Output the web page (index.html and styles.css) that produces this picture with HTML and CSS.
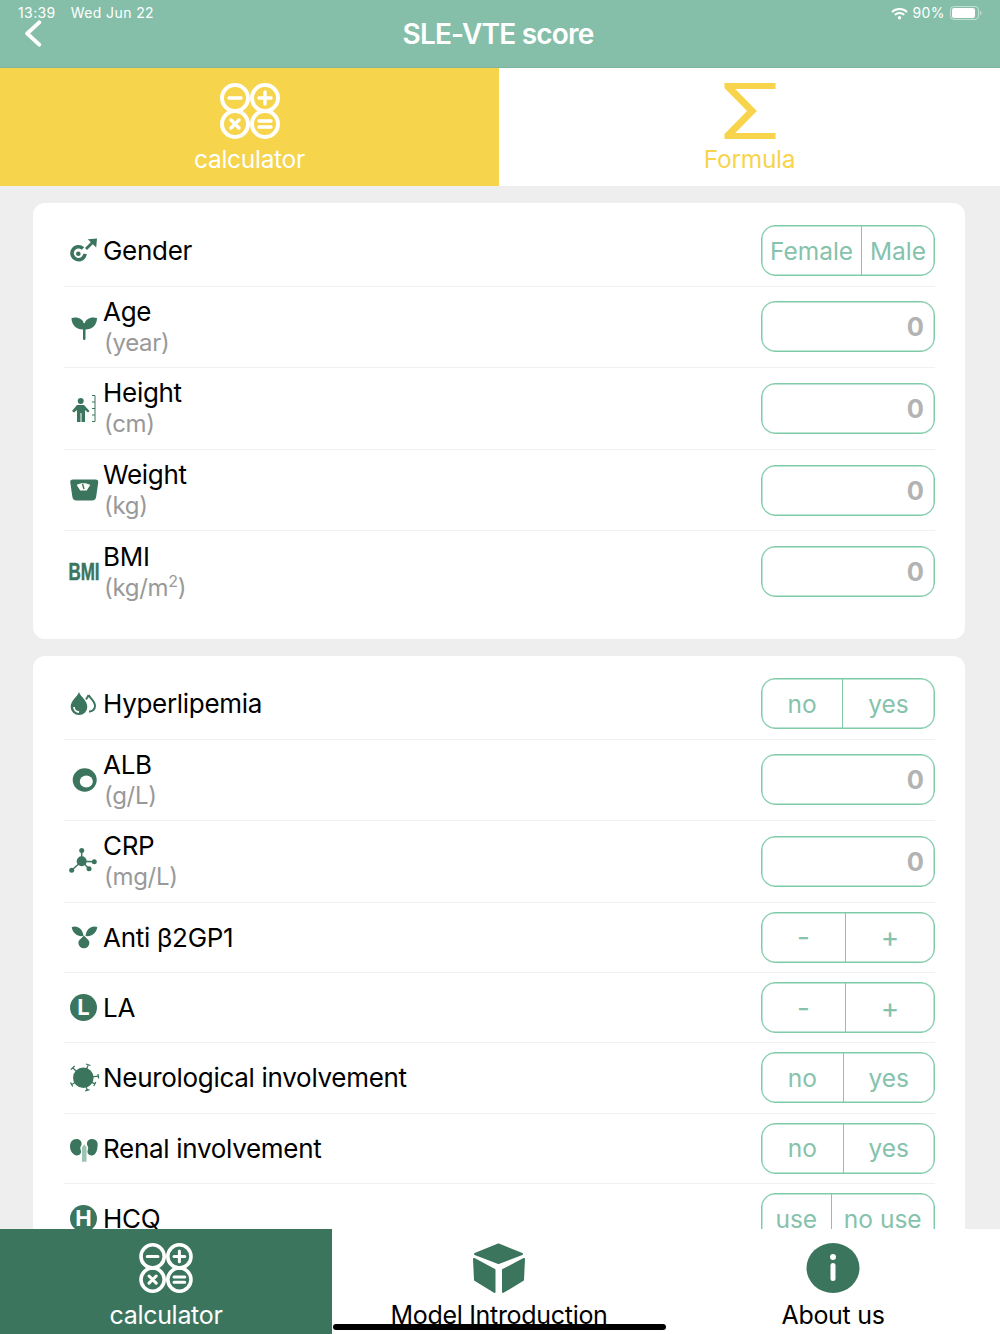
FILE: index.html
```html
<!DOCTYPE html>
<html lang="en">
  <head>
    <meta charset="UTF-8" />
    <meta name="viewport" content="width=device-width, initial-scale=1.0" />
    <title>SLE-VTE score</title>
    <link rel="stylesheet" href="styles.css">
  </head>
  <body>
    <svg class="defs" width="0" height="0">
      <symbol id="calc" viewBox="0 0 60 56">
        <g fill="none" stroke="currentColor" stroke-width="4">
          <circle cx="15" cy="15" r="13" />
          <circle cx="45" cy="15" r="13" />
          <circle cx="15" cy="41" r="13" />
          <circle cx="45" cy="41" r="13" />
          <path stroke-width="3.400" stroke-linecap="round" d="M9 15h12M39 15h12M45 9v12M11 37l8 8M19 37l-8 8M39 38h12M39 44h12" />
        </g>
      </symbol>
    </svg>

    <header class="nav">
      <div class="status">
        <span>13:39</span>
        <span>Wed Jun 22</span>
        <span class="status-right">
          <svg class="wifi" viewBox="0 0 18 13"><path fill="none" stroke="currentColor" stroke-width="2" d="M1 5a11.500 11.500 0 0 1 16 0M4 8a7 7 0 0 1 10 0" /><circle cx="9" cy="11" r="1.800" fill="currentColor" /></svg>
          <span>90%</span>
          <svg class="battery" viewBox="0 0 32 14"><rect x="0.500" y="0.500" width="28" height="13" rx="3.500" fill="none" stroke="currentColor" opacity="0.5" /><rect x="2" y="2" width="23" height="10" rx="2" fill="currentColor" /><path d="M30 5v4c1 0 1.500-1 1.500-2s-.5-2-1.500-2z" fill="currentColor" opacity="0.5" /></svg>
        </span>
      </div>
      <svg class="back" viewBox="0 0 18 28"><path fill="none" stroke="currentColor" stroke-width="4" stroke-linecap="round" stroke-linejoin="round" d="M15.500 2.500L3 14l12.500 11.500" /></svg>
      <h1>SLE-VTE score</h1>
    </header>

    <nav class="tabs">
      <a class="tab tab-on">
        <svg class="tab-icon"><use href="#calc" /></svg>
        <span>calculator</span>
      </a>
      <a class="tab">
        <svg class="tab-icon sigma" viewBox="0 0 52 57"><polygon fill="currentColor" points="0,0 52,0 52,6 11,6 33,28.500 11,51 52,51 52,57 0,57 0,52 23,28.500 0,5" /></svg>
        <span>Formula</span>
      </a>
    </nav>

    <main class="scroll">
      <section class="card">
        <div class="row">
          <svg class="icon" viewBox="0 0 32 32"><path fill="none" stroke="currentColor" stroke-width="3.600" d="M15 13.500A6.500 6.500 0 1 0 17 18.800" /><circle cx="10.300" cy="18.800" r="2.300" fill="currentColor" /><path stroke="currentColor" stroke-width="2.800" d="M18 14l8-8" /><polygon fill="currentColor" points="19.800,4.300 29,3.500 28.200,12.500" /></svg>
          <div class="label">Gender</div>
          <div class="seg"><span class="seg-female">Female</span><span class="seg-rest">Male</span></div>
        </div>
        <div class="row">
          <svg class="icon" viewBox="0 0 32 32"><g fill="currentColor"><path d="M3.500 7c5.500-1.500 11.500 0 12.500 6.500v5C9 19 3.500 14.500 3.500 7z" /><path d="M29 7c-5.500-1.500-11.500 0-12.500 6.500v5C23.500 19 29 14.500 29 7z" /><rect x="15" y="12" width="2.500" height="17" rx="1.200" /></g></svg>
          <div class="label">Age<small>(year)</small></div>
          <div class="field">0</div>
        </div>
        <div class="row">
          <svg class="icon" viewBox="0 0 32 32"><circle cx="12.700" cy="9" r="3" fill="currentColor" /><path fill="currentColor" d="M9 13h7l5.500 6-1.500 1.500-3-2.500v12h-3.500v-9h-1v9H9V18l-3 2.500L4 19z" /><path fill="none" stroke="currentColor" stroke-width="1" d="M24 3.500h3v26h-3M24 10h3M24 16.500h3M24 23h3" /></svg>
          <div class="label">Height<small>(cm)</small></div>
          <div class="field">0</div>
        </div>
        <div class="row">
          <svg class="icon" viewBox="0 0 32 32"><path fill="currentColor" fill-rule="evenodd" d="M5 5.500h22.500c2 0 3 1 2.700 3l-2 14c-.3 2.500-1.700 4-4.200 4H8.500c-2.500 0-3.900-1.500-4.200-4l-2-14c-.3-2 .7-3 2.700-3zm3.700 5.500c3-2.300 10.500-2.300 13.500 0l-3.500 5.500h-6.500z" /><path stroke="currentColor" stroke-width="1.400" d="M14.500 10l1.500 5" /></svg>
          <div class="label">Weight<small>(kg)</small></div>
          <div class="field">0</div>
        </div>
        <div class="row row-last">
          <div class="bmi-icon">BMI</div>
          <div class="label">BMI<small>(kg/m<sup>2</sup>)</small></div>
          <div class="field">0</div>
        </div>
      </section>

      <section class="card">
        <div class="row">
          <svg class="icon" viewBox="0 0 32 32"><path fill="currentColor" d="M11 4c1.500 5 8.300 8 8.300 15a8.300 8 0 0 1-16.600 0c0-7 6.800-10 8.300-15z" /><path fill="none" stroke="currentColor" stroke-width="2" d="M20.500 7c2 4 6.500 6 6.500 11a5.500 5.500 0 0 1-6 5.500M20.500 7c-.5 1.500-1.500 3-2.500 4.500" /><path fill="none" stroke="#fff" stroke-width="1.800" d="M6 19a5 5 0 0 0 5 5" /></svg>
          <div class="label">Hyperlipemia</div>
          <div class="seg"><span class="seg-no">no</span><span class="seg-rest">yes</span></div>
        </div>
        <div class="row">
          <svg class="icon" viewBox="0 0 32 32"><ellipse cx="16.700" cy="16" rx="12" ry="11.700" fill="currentColor" /><ellipse cx="18.300" cy="17.500" rx="6.500" ry="6" fill="#fff" /></svg>
          <div class="label">ALB<small>(g/L)</small></div>
          <div class="field">0</div>
        </div>
        <div class="row">
          <svg class="icon" viewBox="0 0 32 32"><g fill="currentColor"><circle cx="13.700" cy="16.200" r="5" /><circle cx="13.700" cy="5.500" r="2.500" /><circle cx="26.300" cy="16.800" r="2.500" /><circle cx="3.700" cy="25.200" r="2.500" /><circle cx="21" cy="23.800" r="2.500" /></g><path fill="none" stroke="currentColor" stroke-width="1.500" d="M13.700 5.500v10.700l12.600.6M13.700 16.200l-10 9M13.700 16.200l7.300 7.600" /></svg>
          <div class="label">CRP<small>(mg/L)</small></div>
          <div class="field">0</div>
        </div>
        <div class="row row-single">
          <svg class="icon" viewBox="0 0 32 32"><g fill="currentColor"><path d="M3.700 6c5.500-2 11 1.500 11.800 9C9.500 16 4.500 12 3.700 6z" /><path d="M29.300 6c-5.500-2-11 1.500-11.800 9C23.500 16 28.500 12 29.300 6z" /><path d="M16 14.500c2.500 3 5.400 4.500 5.400 7.300a5.500 5.500 0 0 1-11 0c0-2.800 3-4.300 5.600-7.300z" /></g></svg>
          <div class="label">Anti β2GP1</div>
          <div class="seg"><span class="seg-minus seg-sign">-</span><span class="seg-rest seg-sign">+</span></div>
        </div>
        <div class="row row-single">
          <div class="badge">L</div>
          <div class="label">LA</div>
          <div class="seg"><span class="seg-minus seg-sign">-</span><span class="seg-rest seg-sign">+</span></div>
        </div>
        <div class="row row-single">
          <svg class="icon" viewBox="0 0 32 32"><circle cx="15.300" cy="15.800" r="10.300" fill="currentColor" /><path stroke="currentColor" stroke-width="1.300" fill="none" d="M15.300 15.800L4.700 5.800M2.800 7.600l3.800-3.600M15.300 15.800L20.300 2.500M18 2l4.500 1.500M15.300 15.800l15 -1.600M30 12l.6 4.500M15.300 15.800l4 12.700M17 29l4.500-1.300M15.300 15.800L3.700 22.500M2.500 20.500l2.300 4M15.300 15.800l11.500 6M25.800 24l2-4" /></svg>
          <div class="label">Neurological involvement</div>
          <div class="seg"><span class="seg-no2">no</span><span class="seg-rest">yes</span></div>
        </div>
        <div class="row row-single">
          <svg class="icon" viewBox="0 0 32 32"><g fill="currentColor"><path d="M8.500 7c3.500 0 5.500 2.500 5 5.500-.3 1.500-1.200 2-1.200 3.500 0 1.500 1 2.500.7 4.500-.8 3-4.500 4-7 2C3 20.500 2 17 2 14.500 2 10 4.500 7 8.500 7z" /><path d="M24 7c-3.500 0-5.500 2.500-5 5.500.3 1.500 1.200 2 1.200 3.500 0 1.500-1 2.500-.7 4.500.8 3 4.500 4 7 2 2-2 3-5.500 3-8C30.500 10 28 7 24 7z" /></g><path fill="#9cc4b3" d="M14 15l2.200-2.500 2.300 2.500v14.700H14z" /></svg>
          <div class="label">Renal involvement</div>
          <div class="seg"><span class="seg-no2">no</span><span class="seg-rest">yes</span></div>
        </div>
        <div class="row row-single">
          <div class="badge">H</div>
          <div class="label">HCQ</div>
          <div class="seg"><span class="seg-use">use</span><span class="seg-rest">no use</span></div>
        </div>
      </section>
    </main>

    <footer class="bottom">
      <a class="bottom-item bottom-on">
        <svg class="bottom-icon"><use href="#calc" /></svg>
        <span>calculator</span>
      </a>
      <a class="bottom-item">
        <svg class="bottom-icon cube" viewBox="0 0 54 50"><g fill="currentColor" stroke="currentColor" stroke-width="2" stroke-linejoin="round"><polygon points="26.500,1.500 50,11 26.500,20 3,11" /><polygon points="2,16 22.500,27 22.500,49 3,37" /><polygon points="52,16 31,27 31,49 51,37" /></g></svg>
        <span>Model Introduction</span>
      </a>
      <a class="bottom-item">
        <svg class="bottom-icon" viewBox="0 0 54 50"><ellipse cx="27" cy="25" rx="26.500" ry="25" fill="currentColor" /><circle cx="27" cy="14" r="3" fill="#fff" /><rect x="24.500" y="20" width="5" height="18" rx="2.500" fill="#fff" /></svg>
        <span>About us</span>
      </a>
    </footer>
    <div class="home-bar"></div>
  </body>
</html>
```

FILE: styles.css
```css
html,
body {
  margin: 0;
  padding: 0;
  height: 100%;
}
body {
  position: relative;
  display: flex;
  flex-direction: column;
  height: 1334px;
  overflow: hidden;
  background: #eeeeee;
  font-family: Inter, "Liberation Sans", sans-serif;
  color: #000;
}
a {
  color: inherit;
  text-decoration: none;
}
.defs {
  position: absolute;
}

.nav {
  position: relative;
  flex: none;
  display: flex;
  align-items: center;
  justify-content: center;
  height: 68px;
  padding-right: 4px;
  background: #85bfaa;
  color: #fff;
  border-bottom: 1px solid #7bb39e;
  box-sizing: border-box;
}
.nav h1 {
  margin: 0;
  font-size: 28px;
  font-weight: 600;
  letter-spacing: -0.8px;
}
.status {
  position: absolute;
  top: 4px;
  left: 18px;
  right: 18px;
  display: flex;
  gap: 15px;
  font-size: 14px;
  line-height: 18px;
  letter-spacing: 0.4px;
}
.status-right {
  margin-left: auto;
  display: flex;
  align-items: center;
  gap: 5px;
}
.wifi {
  width: 17px;
  height: 13px;
}
.battery {
  width: 32px;
  height: 14px;
}
.back {
  position: absolute;
  left: 24px;
  top: 20px;
  width: 18px;
  height: 27px;
}

.tabs {
  flex: none;
  display: flex;
  height: 118px;
}
.tab {
  flex: 1;
  display: flex;
  flex-direction: column;
  align-items: center;
  padding-top: 15px;
  box-sizing: border-box;
  background: #fff;
  color: #f7d44c;
  font-size: 24.5px;
  line-height: 30px;
  letter-spacing: -0.3px;
}
.tab-on {
  flex: none;
  width: 499px;
  background: #f6d44c;
  color: #fff;
}
.tab-icon {
  width: 60px;
  height: 56px;
  margin-bottom: 5px;
}
.sigma {
  width: 52px;
}

.scroll {
  flex: 1;
  min-height: 0;
  overflow: hidden;
  padding: 17px 35px 0 33px;
}
.card {
  background: #fff;
  border-radius: 12px;
  padding: 13px 30px 27px 31px;
  margin-bottom: 17px;
}
.row {
  display: flex;
  align-items: center;
  padding: 9.300px 0;
  border-bottom: 1px solid #f1f1f1;
}
.row-single {
  padding: 9.150px 0;
}
.row-last {
  border-bottom: 0;
}
.icon {
  flex: none;
  width: 32px;
  height: 32px;
  margin: 0 3px 0 4px;
  color: #3b755d;
}
.badge {
  flex: none;
  width: 27px;
  height: 27px;
  margin: 0 6px 0 6px;
  border-radius: 50%;
  background: #3b755d;
  color: #fff;
  font-size: 22px;
  font-weight: 700;
  line-height: 27px;
  text-align: center;
}
.bmi-icon {
  flex: none;
  width: 32px;
  margin: 0 3px 0 4px;
  color: #3b755d;
  font-family: "Liberation Sans", sans-serif;
  font-size: 20px;
  font-weight: 700;
  line-height: 24px;
  white-space: nowrap;
  display: flex;
  justify-content: center;
  transform: scale(0.85, 1.15);
  -webkit-text-stroke: 0.4px #3b755d;
}
.label {
  flex: 1;
  font-size: 26px;
  line-height: 31px;
  letter-spacing: -0.3px;
}
.label small {
  display: block;
  padding-left: 1px;
  font-size: 24px;
  color: #999;
}
.label sup {
  font-size: 16px;
  line-height: 0;
}

.seg,
.field {
  flex: none;
  box-sizing: border-box;
  width: 174px;
  height: 51px;
  border: 1px solid #7fcba8;
  box-shadow: inset 0 0 0 0.5px #7fcba8;
  border-radius: 14px;
  font-size: 24.5px;
  color: #86c2ac;
}
.seg {
  display: flex;
  overflow: hidden;
}
.seg span {
  display: flex;
  align-items: center;
  justify-content: center;
  box-sizing: border-box;
}
.seg-rest {
  flex: 1;
  border-left: 1px solid #7fcba8;
}
.seg-female {
  width: 99px;
}
.seg-no {
  width: 80px;
}
.seg-no2 {
  width: 80.500px;
}
.seg-minus {
  width: 83px;
}
.seg-use {
  width: 68.500px;
}
.seg-sign {
  font-size: 28px;
}
.field {
  padding-right: 10px;
  font-size: 25.500px;
  line-height: 49px;
  text-align: right;
  font-weight: 700;
  color: #b3b3b3;
}

.bottom {
  flex: none;
  display: grid;
  grid-template-columns: 332px 1fr 1fr;
  height: 105px;
  background: #fff;
  font-size: 25px;
  letter-spacing: -0.3px;
}
.bottom-item {
  display: flex;
  flex-direction: column;
  align-items: center;
  padding-top: 14px;
  color: #3b755d;
}
.bottom-item span {
  color: #000;
  line-height: 30px;
  margin-top: 7px;
}
.bottom-icon {
  width: 54px;
  height: 50px;
}
.bottom-on {
  background: #3b755d;
  color: #fff;
}
.bottom-on span {
  color: #fff;
}
.home-bar {
  position: absolute;
  left: 333px;
  bottom: 4px;
  width: 333px;
  height: 6px;
  border-radius: 3px;
  background: #000;
}
```
